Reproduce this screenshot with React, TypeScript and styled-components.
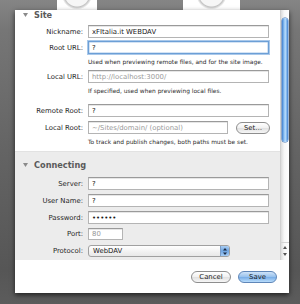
import React from "react";
import styled, { createGlobalStyle } from "styled-components";

const GlobalStyle = createGlobalStyle`
  html, body { margin: 0; padding: 0; }
  body { font-family: "DejaVu Sans", "Liberation Sans", sans-serif; }
`;

const Page = styled.div`
  width: 300px;
  height: 304px;
  overflow: hidden;
  background: linear-gradient(180deg, #858585 0px, #767676 30px, #646464 150px, #565656 270px, #5c5c5c 304px);
  display: flex;
  flex-direction: column;
`;

const Desk = styled.div`
  height: 10px;
  display: flex;
  flex-shrink: 0;
`;

const Thumb = styled.div<{ $left: number; $w: number }>`
  margin-left: ${(p) => p.$left}px;
  width: ${(p) => p.$w}px;
  height: 10px;
  background: radial-gradient(circle at 50% -6px, #f6f6f6 0 12px, #c4c4c4 13px, #dadada 14px, #ffffff 15.5px);
`;

const Sheet = styled.div`
  margin-left: 15px;
  width: 274px;
  height: 283px;
  background: #ffffff;
  box-shadow: 0 2px 5px rgba(0, 0, 0, 0.65);
  display: flex;
  flex-direction: column;
  flex-shrink: 0;
`;

const Body = styled.div`
  height: 250px;
  display: flex;
  flex-shrink: 0;
`;

const Content = styled.div`
  flex: 1;
  display: flex;
  flex-direction: column;
  overflow: hidden;
`;

const Section = styled.div<{ $grey?: boolean; $h: number }>`
  height: ${(p) => p.$h}px;
  flex-shrink: 0;
  background: ${(p) => (p.$grey ? "#ececec" : "#ffffff")};
  border-top: ${(p) => (p.$grey ? "1px solid #e2e2e2" : "none")};
  box-sizing: border-box;
  display: flex;
  flex-direction: column;
  padding-right: 11px;
`;

const Header = styled.div<{ $top: number; $bottom: number }>`
  display: flex;
  align-items: center;
  gap: 6px;
  margin: ${(p) => p.$top}px 0 ${(p) => p.$bottom}px 8px;
  height: 9px;
  font-size: 8.2px;
  font-weight: bold;
  color: #5a5a5a;
`;

const Tri = styled.svg`
  width: 5px;
  height: 4px;
  flex-shrink: 0;
`;

const Row = styled.div<{ $mb?: number }>`
  display: grid;
  grid-template-columns: 68px 1fr;
  column-gap: 5px;
  align-items: center;
  margin-bottom: ${(p) => p.$mb ?? 0}px;
`;

const Label = styled.div`
  text-align: right;
  font-size: 6.9px;
  color: #1e1e1e;
  white-space: nowrap;
`;

const Field = styled.div<{ $focus?: boolean; $dim?: boolean; $w?: number; $h?: number }>`
  box-sizing: border-box;
  height: ${(p) => p.$h ?? 13}px;
  width: ${(p) => (p.$w ? `${p.$w}px` : "100%")};
  background: #ffffff;
  border: 1px solid ${(p) => (p.$focus ? "#6c9fd6" : "#b4b4b4")};
  border-top-color: ${(p) => (p.$focus ? "#6c9fd6" : "#9a9a9a")};
  box-shadow: ${(p) =>
    p.$focus ? "0 0 0 1px #a9c8ea, inset 0 0 0 0.5px #a9c8ea" : "inset 0 1px 0 #e6e6e6"};
  font-size: 6.9px;
  color: ${(p) => (p.$dim ? "#9a9a9a" : "#1a1a1a")};
  padding-left: 3px;
  display: flex;
  align-items: center;
  white-space: nowrap;
  overflow: hidden;
`;

const Help = styled.div<{ $mb: number }>`
  margin: 3px 0 ${(p) => p.$mb}px 73px;
  height: 10px;
  line-height: 10px;
  font-size: 5.9px;
  color: #2a2a2a;
  white-space: nowrap;
`;

const Pair = styled.div`
  display: flex;
  align-items: center;
  gap: 8px;
`;

const Pill = styled.button<{ $primary?: boolean; $w: number; $h: number }>`
  box-sizing: border-box;
  width: ${(p) => p.$w}px;
  height: ${(p) => p.$h}px;
  padding: 0;
  border-radius: 7px;
  border: 1px solid ${(p) => (p.$primary ? "#5f86b8" : "#8e8e8e")};
  background: ${(p) =>
    p.$primary
      ? "linear-gradient(180deg, #cfe3f8 0%, #9cc4ee 45%, #7cb0e8 55%, #b8dcfb 100%)"
      : "linear-gradient(180deg, #ffffff 0%, #f2f2f2 45%, #e2e2e2 55%, #f6f6f6 100%)"};
  font-family: "DejaVu Sans", sans-serif;
  font-size: 6.9px;
  color: #1a1a1a;
  display: flex;
  align-items: center;
  justify-content: center;
`;

const Popup = styled.div`
  box-sizing: border-box;
  width: 142px;
  height: 12px;
  border: 1px solid #a0a0a0;
  border-radius: 3px;
  background: linear-gradient(180deg, #ffffff 0%, #f3f3f3 50%, #e8e8e8 100%);
  display: flex;
  align-items: center;
  font-size: 6.9px;
  color: #1a1a1a;
  overflow: hidden;
`;

const PopupText = styled.div`
  flex: 1;
  padding-left: 4px;
`;

const Stepper = styled.div`
  width: 8px;
  height: 100%;
  background: linear-gradient(180deg, #a9cdf2 0%, #6fa5e2 50%, #a6cdf5 100%);
  border-left: 1px solid #7a9cc6;
  display: flex;
  align-items: center;
  justify-content: center;
`;

const Scroll = styled.div`
  width: 9px;
  flex-shrink: 0;
  background: linear-gradient(90deg, #dcdcdc 0%, #f7f7f7 40%, #ffffff 100%);
  border-left: 1px solid #d0d0d0;
  box-sizing: border-box;
  display: flex;
  flex-direction: column;
  align-items: center;
  padding-top: 8px;
`;

const Thumbbar = styled.div`
  width: 6px;
  height: 124px;
  border-radius: 3px;
  background: linear-gradient(90deg, #3f7fcf 0%, #8cc1f4 35%, #b9dcfb 55%, #6aa6e6 85%, #3d78c7 100%);
  box-shadow: 0 0 0 0.5px #3b6db0;
`;

const Track = styled.div`
  flex: 1;
`;

const Arrows = styled.div`
  display: flex;
  flex-direction: column;
  align-items: center;
  gap: 4px;
  padding-bottom: 4px;
  border-top: 1px solid #d4d4d4;
  padding-top: 3px;
  width: 100%;
`;

const Footer = styled.div`
  flex: 1;
  display: flex;
  align-items: center;
  justify-content: flex-end;
  gap: 7px;
  padding-right: 12px;
  padding-top: 1px;
`;

const Down = () => (
  <Tri viewBox="0 0 5 4">
    <polygon points="0,0 5,0 2.5,4" fill="#8a8a8a" />
  </Tri>
);

const Arrow = ({ up }: { up?: boolean }) => (
  <svg width="4" height="3" viewBox="0 0 4 3">
    <polygon points={up ? "0,3 4,3 2,0" : "0,0 4,0 2,3"} fill="#555" />
  </svg>
);

export default function App() {
  return (
    <>
      <GlobalStyle />
      <Page>
        <Desk>
          <Thumb $left={57} $w={40} />
          <Thumb $left={86} $w={57} />
        </Desk>
        <Sheet>
          <Body>
            <Content>
              <Section $h={141}>
                <Header $top={0} $bottom={6}>
                  <Down />
                  Site
                </Header>
                <Row $mb={3}>
                  <Label>Nickname:</Label>
                  <Field>xFItalia.it WEBDAV</Field>
                </Row>
                <Row>
                  <Label>Root URL:</Label>
                  <Field $focus>?</Field>
                </Row>
                <Help $mb={3}>Used when previewing remote files, and for the site image.</Help>
                <Row>
                  <Label>Local URL:</Label>
                  <Field $dim>http://localhost:3000/</Field>
                </Row>
                <Help $mb={8}>If specified, used when previewing local files.</Help>
                <Row $mb={4}>
                  <Label>Remote Root:</Label>
                  <Field>?</Field>
                </Row>
                <Row>
                  <Label>Local Root:</Label>
                  <Pair>
                    <Field $dim $w={140}>~/Sites/domain/ (optional)</Field>
                    <Pill $w={34} $h={12}>Set…</Pill>
                  </Pair>
                </Row>
                <Help $mb={0}>To track and publish changes, both paths must be set.</Help>
              </Section>
              <Section $grey $h={109}>
                <Header $top={8} $bottom={8}>
                  <Down />
                  Connecting
                </Header>
                <Row $mb={4}>
                  <Label>Server:</Label>
                  <Field>?</Field>
                </Row>
                <Row $mb={4}>
                  <Label>User Name:</Label>
                  <Field>?</Field>
                </Row>
                <Row $mb={4}>
                  <Label>Password:</Label>
                  <Field>••••••</Field>
                </Row>
                <Row $mb={5}>
                  <Label>Port:</Label>
                  <Field $dim $w={35} $h={12}>80</Field>
                </Row>
                <Row>
                  <Label>Protocol:</Label>
                  <Popup>
                    <PopupText>WebDAV</PopupText>
                    <Stepper>
                      <svg width="4" height="7" viewBox="0 0 4 7">
                        <polygon points="0,2.5 4,2.5 2,0" fill="#1a2a44" />
                        <polygon points="0,4.5 4,4.5 2,7" fill="#1a2a44" />
                      </svg>
                    </Stepper>
                  </Popup>
                </Row>
              </Section>
            </Content>
            <Scroll>
              <Thumbbar />
              <Track />
              <Arrows>
                <Arrow up />
                <Arrow />
              </Arrows>
            </Scroll>
          </Body>
          <Footer>
            <Pill $w={40} $h={12}>Cancel</Pill>
            <Pill $primary $w={39} $h={12}>Save</Pill>
          </Footer>
        </Sheet>
      </Page>
    </>
  );
}
